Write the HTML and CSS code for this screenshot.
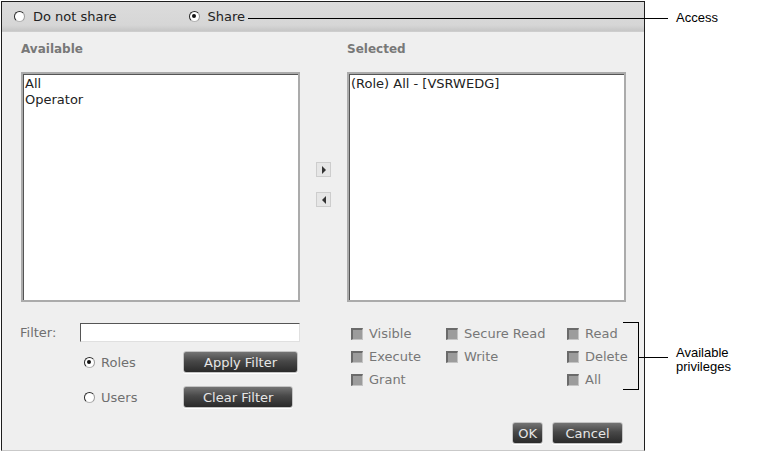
FILE: index.html
```
<!DOCTYPE html>
<html lang="en">
<head>
  <meta charset="UTF-8" />
  <title>Share Settings</title>
  <link rel="stylesheet" href="styles.css">
</head>
<body>
  <div class="sheet">
    <div class="dialog">
      <div class="access-bar">
        <label class="radio-item first"><span class="radio"></span>Do not share</label>
        <label class="radio-item"><span class="radio checked"></span>Share</label>
      </div>

      <div class="dialog-body">
        <div class="pick-grid">
          <div class="col-label">Available</div>
          <div></div>
          <div class="col-label right">Selected</div>

          <div class="list">
            <div>All</div>
            <div>Operator</div>
          </div>
          <div class="move-btns">
            <button class="move-btn" aria-label="Add"><span class="tri-right"></span></button>
            <button class="move-btn" aria-label="Remove"><span class="tri-left"></span></button>
          </div>
          <div class="list">
            <div>(Role) All - [VSRWEDG]</div>
          </div>

          <div class="filter-block">
            <div class="filter-row">
              <label for="filterText">Filter:</label>
              <input type="text" id="filterText" />
            </div>
            <div class="option-row">
              <span class="opt-label"><span class="radio checked"></span>Roles</span>
              <button class="dark-btn wide">Apply Filter</button>
            </div>
            <div class="option-row">
              <span class="opt-label"><span class="radio"></span>Users</span>
              <button class="dark-btn">Clear Filter</button>
            </div>
          </div>
          <div></div>
          <div class="privileges">
            <span class="priv"><span class="check"></span>Visible</span>
            <span class="priv"><span class="check"></span>Secure Read</span>
            <span class="priv"><span class="check"></span>Read</span>
            <span class="priv"><span class="check"></span>Execute</span>
            <span class="priv"><span class="check"></span>Write</span>
            <span class="priv"><span class="check"></span>Delete</span>
            <span class="priv"><span class="check"></span>Grant</span>
            <span></span>
            <span class="priv"><span class="check"></span>All</span>
          </div>
        </div>

        <div class="footer">
          <button class="dark-btn small">OK</button>
          <button class="dark-btn cancel">Cancel</button>
        </div>
      </div>
    </div>

    <!-- callouts -->
    <div class="callout-line access-line"></div>
    <div class="callout-text access-text">Access</div>
    <div class="bracket"></div>
    <div class="callout-line priv-line"></div>
    <div class="callout-text priv-text">Available<br>privileges</div>
  </div>
</body>
</html>
```

FILE: styles.css
```
:root {
  --frame: #1e1e1e;
  --panel: #efefef;
  --label: #6f6f6f;
  --text: #222;
}
body {
  margin: 0;
  background: #fff;
  font-family: 'DejaVu Sans', Verdana, sans-serif;
  font-size: 13px;
  color: var(--text);
}
.sheet {
  position: relative;
  width: 759px;
  height: 455px;
}
.dialog {
  margin: 1px 0 0 1px;
  width: 642px;
  height: 448px;
  border: 1px solid var(--frame);
  border-bottom-color: #c9c9c9;
  background: var(--panel);
  display: flex;
  flex-direction: column;
}
.access-bar {
  height: 29px;
  display: flex;
  align-items: center;
  padding-left: 12px;
  background: linear-gradient(#dcdcdc, #d6d6d6 80%, #c6c6c6);
  border-bottom: 1px solid #cdcdcd;
}
.radio-item {
  display: flex;
  align-items: center;
  gap: 8px;
  line-height: 16px;
}
.radio-item.first {
  margin-right: 72px;
}
.radio {
  position: relative;
  display: inline-block;
  width: 11px;
  height: 11px;
  box-sizing: border-box;
  border-radius: 50%;
  border: 1.5px solid;
  border-color: #2a2a2a #9a9a9a #b5b5b5 #2a2a2a;
  background: #fff;
  flex: none;
}
.radio.checked::after {
  content: "";
  position: absolute;
  left: 2px;
  top: 2px;
  width: 4px;
  height: 4px;
  border-radius: 50%;
  background: #111;
}
.dialog-body {
  padding: 10px 17px 0 19px;
}
.pick-grid {
  display: grid;
  grid-template-columns: 279px 47px 279px;
  grid-template-rows: 14px 230px auto;
  row-gap: 16px;
}
.col-label {
  font-weight: bold;
  font-size: 12px;
  line-height: 14px;
  color: #787878;
}
.list {
  background: #fff;
  border: 2px solid #ababab;
  box-shadow: inset 1px 1px 0 #555;
  padding: 2px 2px;
  line-height: 16px;
  overflow: hidden;
}
.move-btns {
  display: flex;
  flex-direction: column;
  align-items: center;
  gap: 15px;
  padding-top: 90px;
}
.move-btn {
  width: 15px;
  height: 15px;
  padding: 0;
  background: #e6e6e6;
  border: 1px solid #cdcdcd;
  display: flex;
  align-items: center;
  justify-content: center;
}
.tri-right {
  border-left: 4px solid #333;
  border-top: 4px solid transparent;
  border-bottom: 4px solid transparent;
}
.tri-left {
  border-right: 4px solid #333;
  border-top: 4px solid transparent;
  border-bottom: 4px solid transparent;
}
.filter-block {
  padding-top: 5px;
  color: var(--label);
}
.filter-row {
  display: flex;
  align-items: center;
  margin-left: -1px;
}
.filter-row label {
  width: 60px;
}
.filter-row input {
  width: 220px;
  height: 19px;
  box-sizing: border-box;
  border: 1px solid;
  border-color: #555 #e0e0e0 #e0e0e0 #555;
  background: #fff;
  padding: 0 3px;
  font: inherit;
}
.option-row {
  display: flex;
  align-items: center;
  height: 22px;
  margin-top: 9px;
  padding-left: 63px;
}
.option-row + .option-row {
  margin-top: 13px;
}
.opt-label {
  width: 99px;
  display: flex;
  align-items: center;
  gap: 6px;
}
.dark-btn {
  height: 22px;
  padding: 0 19px;
  font: inherit;
  color: #e6e6e6;
  background: linear-gradient(#747474, #484848 45%, #2a2a2a);
  border: 1px solid #c4c4c4;
  border-radius: 3px;
  box-shadow: 0 1px 0 #fff;
  cursor: pointer;
}
.dark-btn.wide {
  width: 115px;
  padding: 0;
}
.privileges {
  display: grid;
  grid-template-columns: 95px 121px 1fr;
  grid-auto-rows: 23px;
  padding: 4px 0 0 4px;
  color: #777;
}
.priv {
  display: flex;
  align-items: center;
  gap: 6px;
}
.check {
  width: 12px;
  height: 12px;
  box-sizing: border-box;
  background: #9c9c9c;
  border: 1px solid;
  border-width: 2px 1px 1px 2px;
  border-color: #6a6a6a #c4c4c4 #c4c4c4 #6a6a6a;
  flex: none;
}
.footer {
  display: flex;
  justify-content: flex-end;
  gap: 9px;
  margin-top: 14px;
  padding-right: 4px;
}
.dark-btn.small {
  padding: 0 5px;
}
.dark-btn.cancel {
  width: 71px;
  padding: 0;
}
.callout-line {
  position: absolute;
  height: 1px;
  background: #000;
}
.access-line {
  left: 248px;
  top: 17px;
  width: 420px;
}
.callout-text {
  position: absolute;
  left: 676px;
  font-family: 'Liberation Sans', Arial, sans-serif;
  font-size: 13px;
  line-height: 14px;
  color: #000;
}
.access-text {
  top: 10px;
}
.bracket {
  position: absolute;
  left: 623px;
  top: 321px;
  width: 16px;
  height: 68px;
  box-sizing: border-box;
  border: 1px solid #000;
  border-left: none;
}
.priv-line {
  left: 638px;
  top: 356px;
  width: 30px;
}
.priv-text {
  top: 345px;
}
```
